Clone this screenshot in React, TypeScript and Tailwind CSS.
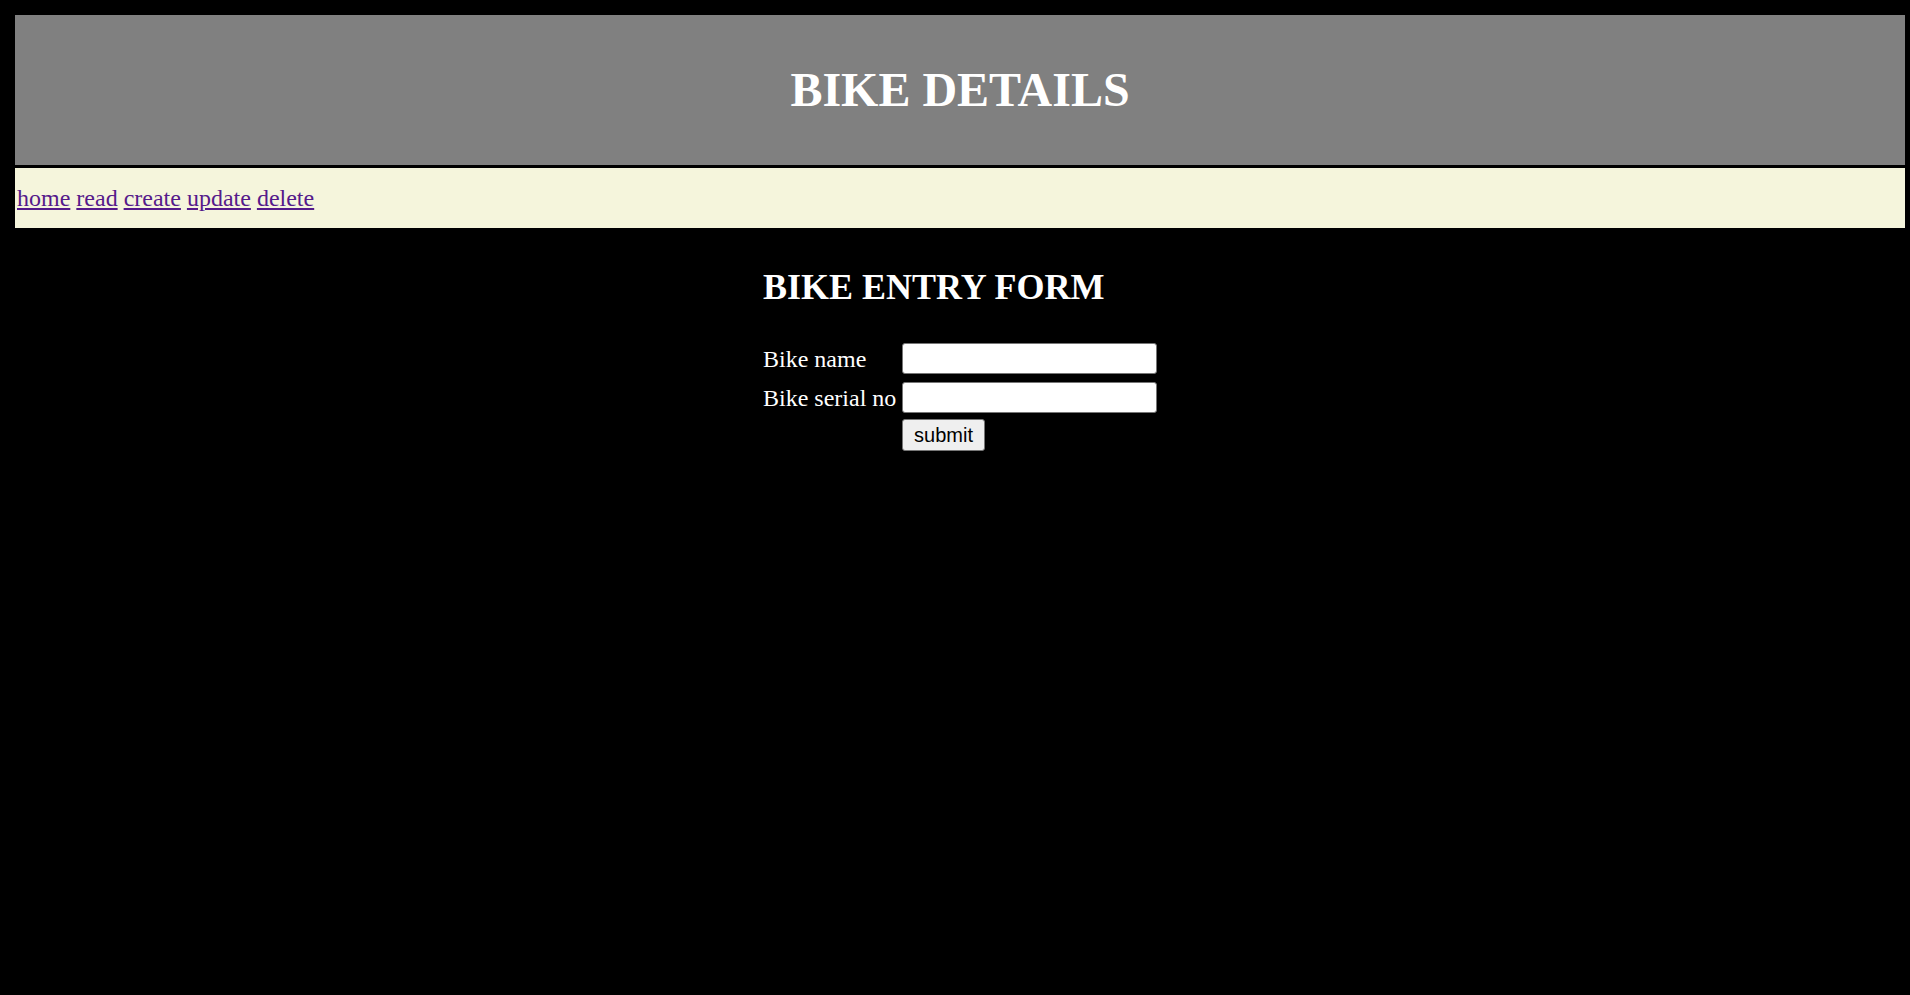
import { useState } from 'react';

const LINKS = ['home', 'read', 'create', 'update', 'delete'];

export default function App() {
  const [bikeName, setBikeName] = useState('');
  const [serialNo, setSerialNo] = useState('');

  return (
    <div className="min-h-screen bg-black pt-[15px] pr-[5px] pl-[15px] font-['Liberation_Serif',serif]">
      <div className="flex h-[150px] items-center justify-center bg-[#808080]">
        <h1 className="text-[48px] font-bold leading-none text-white">BIKE DETAILS</h1>
      </div>

      <div className="mt-[3px] flex h-[60px] items-center bg-[#f5f5dc] pl-[2px]">
        <nav className="text-[24px] leading-[28px] whitespace-pre">
          {LINKS.map((link, i) => (
            <span key={link}>
              <a href="#" className="text-[#551a8b] underline">
                {link}
              </a>
              {i < LINKS.length - 1 ? ' ' : ''}
            </span>
          ))}
        </nav>
      </div>

      <div className="flex justify-center">
        <div className="w-[394px]">
          <h2 className="mt-[41px] text-[36px] font-bold leading-[36px] text-white">BIKE ENTRY FORM</h2>

          <form className="mt-[38px]" onSubmit={e => e.preventDefault()}>
            <div className="flex h-[31px] items-center">
              <label className="w-[139px] text-[24px] leading-[28px] text-white">Bike name</label>
              <input
                value={bikeName}
                onChange={e => setBikeName(e.target.value)}
                className="h-[31px] w-[255px] rounded-[3px] border border-[#767676] bg-white px-[3px] text-[20px] text-black"
              />
            </div>
            <div className="mt-[8px] flex h-[31px] items-center">
              <label className="w-[139px] text-[24px] leading-[28px] whitespace-nowrap text-white">Bike serial no</label>
              <input
                value={serialNo}
                onChange={e => setSerialNo(e.target.value)}
                className="h-[31px] w-[255px] rounded-[3px] border border-[#767676] bg-white px-[3px] text-[20px] text-black"
              />
            </div>
            <div className="mt-[6px] flex">
              <div className="w-[139px]" />
              <button
                type="submit"
                className="h-[32px] w-[83px] rounded-[3px] border border-[#767676] bg-[#efefef] font-['Liberation_Sans',Arial,sans-serif] text-[20px] leading-none text-black"
              >
                submit
              </button>
            </div>
          </form>
        </div>
      </div>
    </div>
  );
}
